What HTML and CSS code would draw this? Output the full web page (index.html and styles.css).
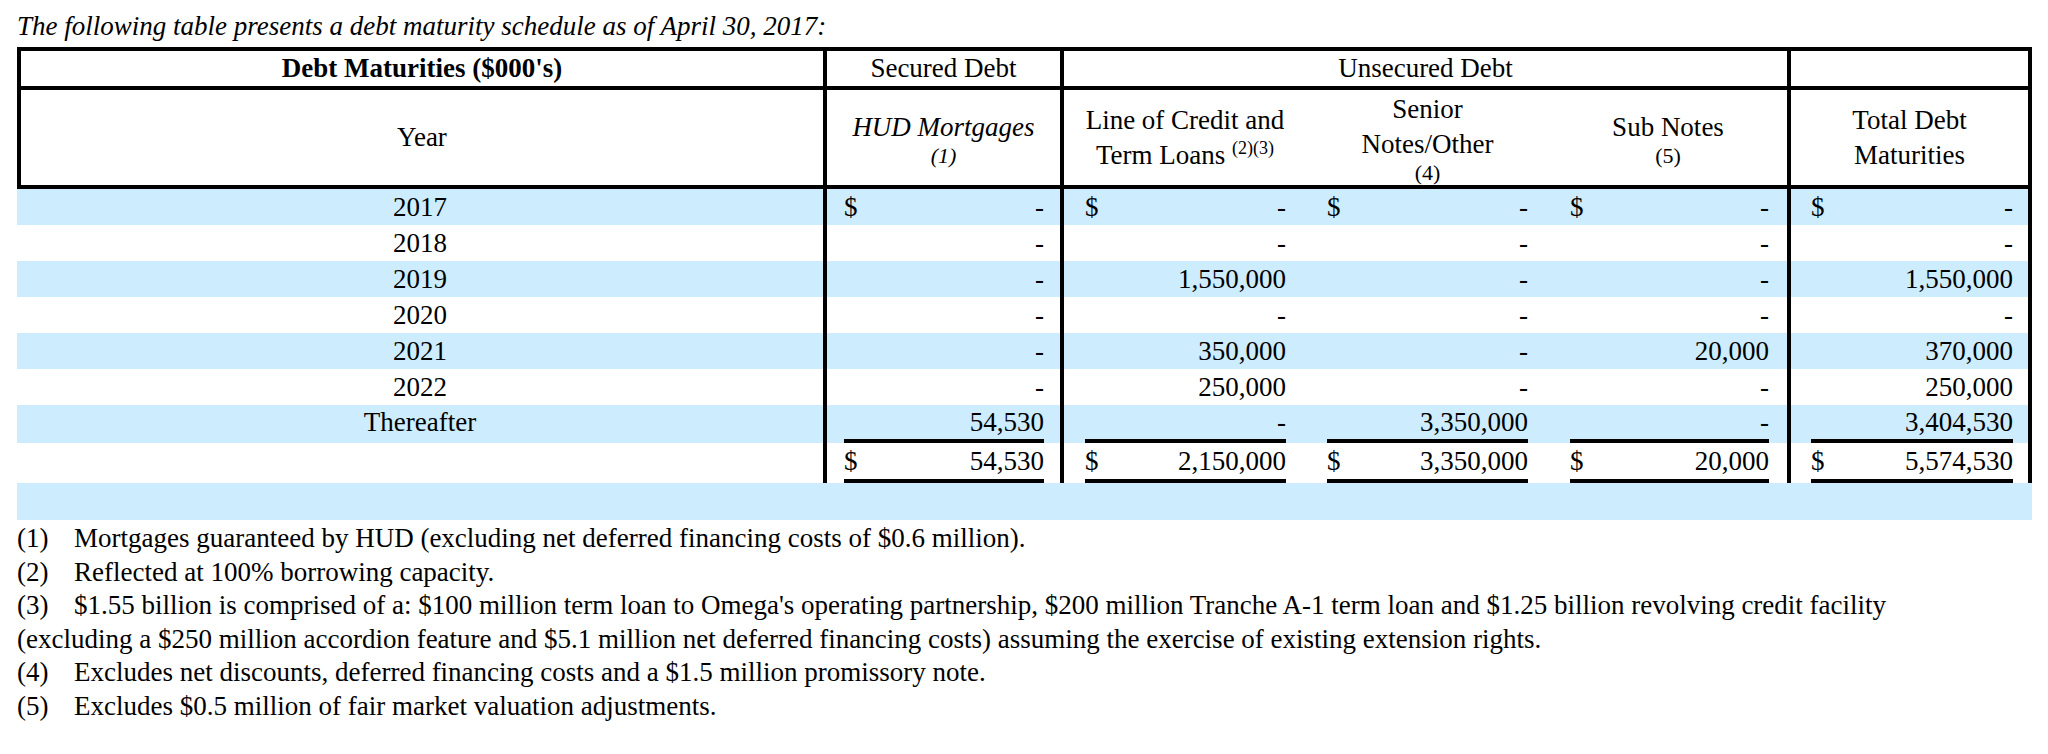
FILE: index.html
```html
<!DOCTYPE html>
<html lang="en">
<head>
<meta charset="utf-8">
<title>Debt maturity schedule</title>
<link rel="stylesheet" href="styles.css">
</head>
<body>
<p class="intro">The following table presents a debt maturity schedule as of April 30, 2017:</p>
<table class="debt">
  <colgroup>
    <col class="c-year"><col class="c-hud"><col class="c-loc"><col class="c-sen"><col class="c-sub"><col class="c-tot">
  </colgroup>
  <thead>
    <tr class="h1">
      <th class="yr strong">Debt Maturities ($000's)</th>
      <th class="hud">Secured Debt</th>
      <th class="uns" colspan="3">Unsecured Debt</th>
      <th class="tot"></th>
    </tr>
    <tr class="h2">
      <th class="yr">Year</th>
      <th class="hud"><span class="ln"><i>HUD Mortgages</i></span><span class="sm"><i>(1)</i></span></th>
      <th class="loc"><span class="ln">Line of Credit and</span><span class="ln">Term Loans <span class="sup">(2)(3)</span></span></th>
      <th class="sen"><span class="ln">Senior</span><span class="ln">Notes/Other</span><span class="sm">(4)</span></th>
      <th class="sub"><span class="ln">Sub Notes</span><span class="sm">(5)</span></th>
      <th class="tot"><span class="ln">Total Debt</span><span class="ln">Maturities</span></th>
    </tr>
  </thead>
  <tbody>
    <tr class="alt">
      <td class="yr">2017</td>
      <td class="hud"><div class="amt"><span>$</span><span class="v">-</span></div></td>
      <td class="loc"><div class="amt"><span>$</span><span class="v">-</span></div></td>
      <td class="sen"><div class="amt"><span>$</span><span class="v">-</span></div></td>
      <td class="sub"><div class="amt"><span>$</span><span class="v">-</span></div></td>
      <td class="tot"><div class="amt"><span>$</span><span class="v">-</span></div></td>
    </tr>
    <tr>
      <td class="yr">2018</td>
      <td class="hud"><div class="amt"><span class="v">-</span></div></td>
      <td class="loc"><div class="amt"><span class="v">-</span></div></td>
      <td class="sen"><div class="amt"><span class="v">-</span></div></td>
      <td class="sub"><div class="amt"><span class="v">-</span></div></td>
      <td class="tot"><div class="amt"><span class="v">-</span></div></td>
    </tr>
    <tr class="alt">
      <td class="yr">2019</td>
      <td class="hud"><div class="amt"><span class="v">-</span></div></td>
      <td class="loc"><div class="amt"><span class="v">1,550,000</span></div></td>
      <td class="sen"><div class="amt"><span class="v">-</span></div></td>
      <td class="sub"><div class="amt"><span class="v">-</span></div></td>
      <td class="tot"><div class="amt"><span class="v">1,550,000</span></div></td>
    </tr>
    <tr>
      <td class="yr">2020</td>
      <td class="hud"><div class="amt"><span class="v">-</span></div></td>
      <td class="loc"><div class="amt"><span class="v">-</span></div></td>
      <td class="sen"><div class="amt"><span class="v">-</span></div></td>
      <td class="sub"><div class="amt"><span class="v">-</span></div></td>
      <td class="tot"><div class="amt"><span class="v">-</span></div></td>
    </tr>
    <tr class="alt">
      <td class="yr">2021</td>
      <td class="hud"><div class="amt"><span class="v">-</span></div></td>
      <td class="loc"><div class="amt"><span class="v">350,000</span></div></td>
      <td class="sen"><div class="amt"><span class="v">-</span></div></td>
      <td class="sub"><div class="amt"><span class="v">20,000</span></div></td>
      <td class="tot"><div class="amt"><span class="v">370,000</span></div></td>
    </tr>
    <tr>
      <td class="yr">2022</td>
      <td class="hud"><div class="amt"><span class="v">-</span></div></td>
      <td class="loc"><div class="amt"><span class="v">250,000</span></div></td>
      <td class="sen"><div class="amt"><span class="v">-</span></div></td>
      <td class="sub"><div class="amt"><span class="v">-</span></div></td>
      <td class="tot"><div class="amt"><span class="v">250,000</span></div></td>
    </tr>
    <tr class="alt under sub-row">
      <td class="yr">Thereafter</td>
      <td class="hud"><div class="amt"><span class="v">54,530</span></div></td>
      <td class="loc"><div class="amt"><span class="v">-</span></div></td>
      <td class="sen"><div class="amt"><span class="v">3,350,000</span></div></td>
      <td class="sub"><div class="amt"><span class="v">-</span></div></td>
      <td class="tot"><div class="amt"><span class="v">3,404,530</span></div></td>
    </tr>
    <tr class="under total-row">
      <td class="yr"></td>
      <td class="hud"><div class="amt"><span>$</span><span class="v">54,530</span></div></td>
      <td class="loc"><div class="amt"><span>$</span><span class="v">2,150,000</span></div></td>
      <td class="sen"><div class="amt"><span>$</span><span class="v">3,350,000</span></div></td>
      <td class="sub"><div class="amt"><span>$</span><span class="v">20,000</span></div></td>
      <td class="tot"><div class="amt"><span>$</span><span class="v">5,574,530</span></div></td>
    </tr>
    <tr class="alt blank">
      <td colspan="6"></td>
    </tr>
  </tbody>
</table>
<div class="notes">
  <p><span class="num">(1)</span>Mortgages guaranteed by HUD (excluding net deferred financing costs of $0.6 million).</p>
  <p><span class="num">(2)</span>Reflected at 100% borrowing capacity.</p>
  <p><span class="num">(3)</span>$1.55 billion is comprised of a: $100 million term loan to Omega's operating partnership, $200 million Tranche A-1 term loan and $1.25 billion revolving credit facility<br>(excluding a $250 million accordion feature and $5.1 million net deferred financing costs) assuming the exercise of existing extension rights.</p>
  <p><span class="num">(4)</span>Excludes net discounts, deferred financing costs and a $1.5 million promissory note.</p>
  <p><span class="num">(5)</span>Excludes $0.5 million of fair market valuation adjustments.</p>
</div>
</body>
</html>
```

FILE: styles.css
```css
* {
  box-sizing: border-box;
}

body {
  margin: 0;
  padding: 11px 0 0 17px;
  background: #ffffff;
  color: #000000;
  font-family: "Liberation Serif", "Times New Roman", serif;
  font-size: 27px;
}

.intro {
  margin: 0 0 6px;
  font-style: italic;
  line-height: 30px;
  white-space: nowrap;
}

.debt {
  border-collapse: separate;
  border-spacing: 0;
  table-layout: fixed;
  width: 2015px;
}

.c-year { width: 810px; }
.c-hud  { width: 237px; }
.c-loc  { width: 242px; }
.c-sen  { width: 243px; }
.c-sub  { width: 242px; }
.c-tot  { width: 241px; }

.debt th,
.debt td {
  padding: 0;
  font-weight: normal;
  white-space: nowrap;
}

.debt th {
  text-align: center;
  vertical-align: middle;
  background: #ffffff;
}

.h1 th {
  height: 43px;
  line-height: 35px;
  border-top: 4px solid #000;
  border-bottom: 4px solid #000;
}

.h2 th {
  height: 99px;
  border-bottom: 4px solid #000;
}

.debt th.yr {
  border-left: 4px solid #000;
}

.debt th.strong {
  font-weight: bold;
}

.ln {
  display: block;
  line-height: 35px;
}

.sm {
  display: block;
  font-size: 22px;
  line-height: 21px;
}

.sup {
  font-size: 18px;
  line-height: 0;
  vertical-align: 10px;
}

.yr,
.hud,
.uns,
.sub,
.tot {
  border-right: 4px solid #000;
}

.debt td {
  height: 36px;
  line-height: 36px;
  vertical-align: middle;
}

.debt td.yr { text-align: center; }
.debt td.hud { padding: 0 16px 0 17px; }
.debt td.loc { padding: 0 20px 0 21px; }
.debt td.sen { padding: 0 21px 0 21px; }
.debt td.sub { padding: 0 18px 0 21px; }
.debt td.tot { padding: 0 15px 0 20px; }

.amt {
  display: flex;
}

.amt .v {
  margin-left: auto;
}

.alt td {
  background: #cdecfd;
}

.under td {
  vertical-align: top;
  line-height: 34px;
}

.under .amt {
  border-bottom: 4px solid #000;
}

.sub-row td { height: 38px; }
.total-row td { height: 40px; line-height: 36px; }

.blank td {
  height: 37px;
  border: none;
}

.notes {
  margin-top: 2px;
  line-height: 33.6px;
}

.notes p {
  margin: 0;
  white-space: nowrap;
}

.num {
  display: inline-block;
  width: 57px;
}
```
